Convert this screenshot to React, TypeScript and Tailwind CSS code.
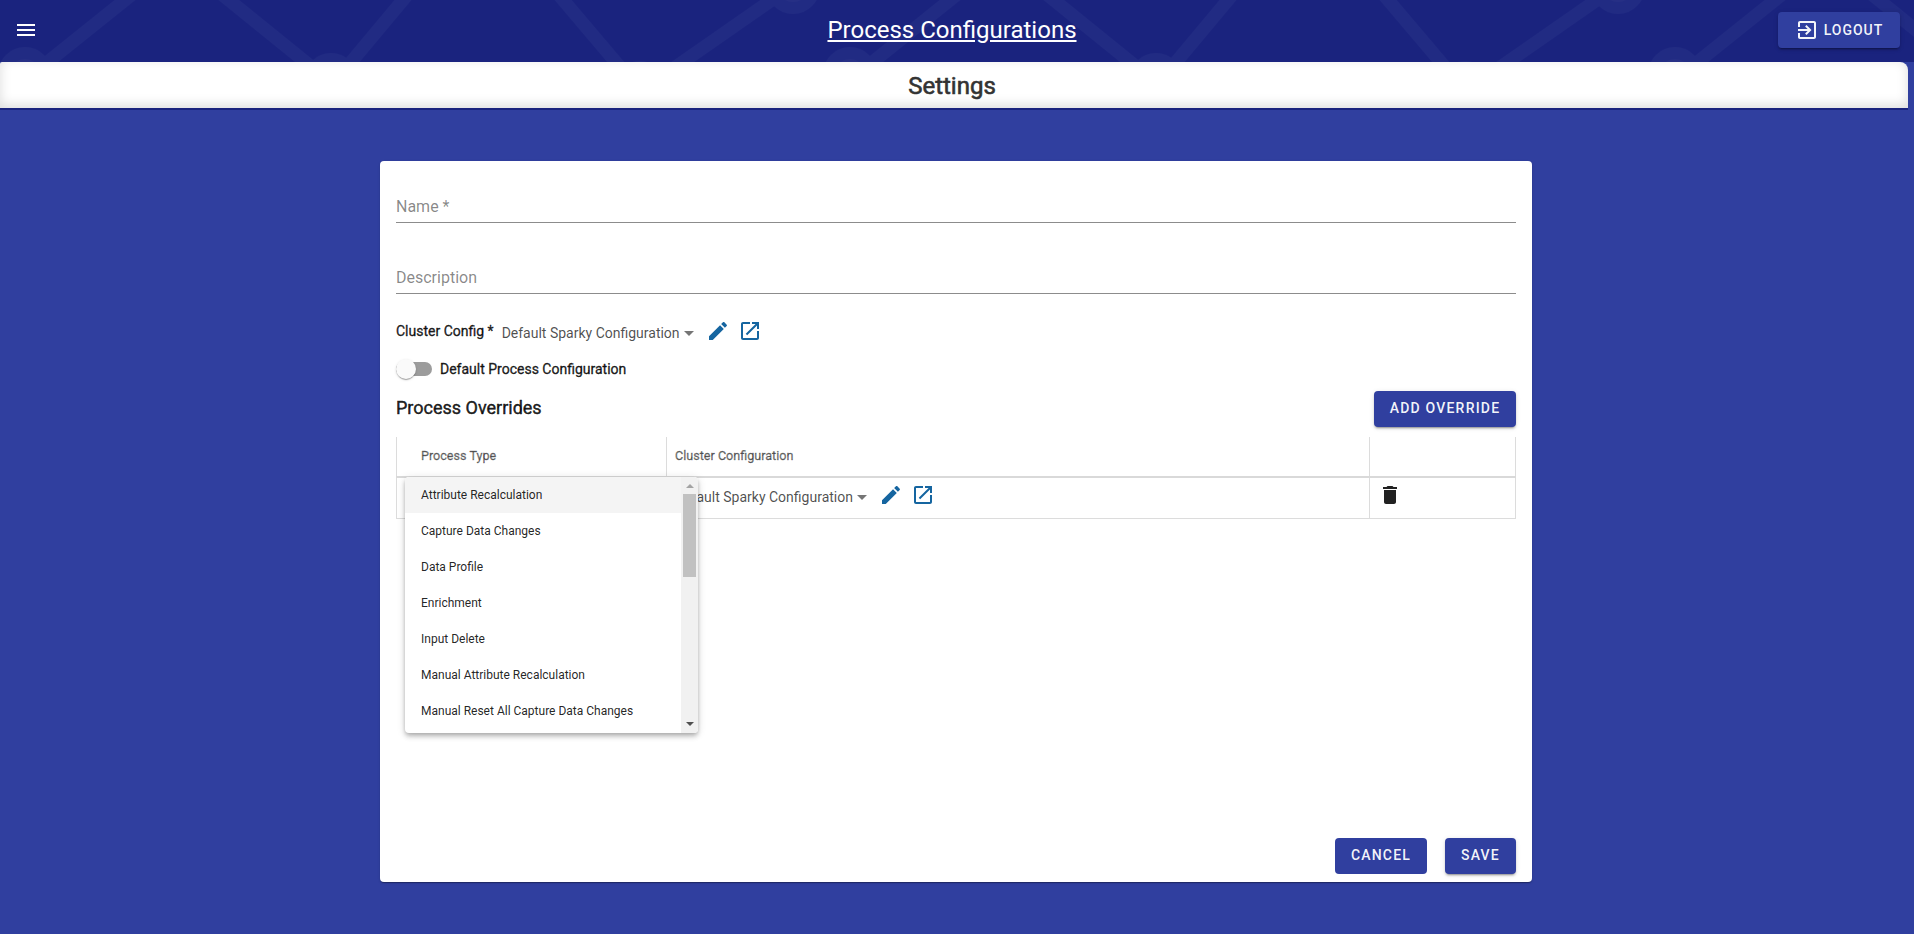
import React from "react";

const PROCESS_TYPES = [
  "Attribute Recalculation",
  "Capture Data Changes",
  "Data Profile",
  "Enrichment",
  "Input Delete",
  "Manual Attribute Recalculation",
  "Manual Reset All Capture Data Changes",
];

const ICONS = {
  menu: "M3 18h18v-2H3v2zm0-5h18v-2H3v2zm0-7v2h18V6H3z",
  edit: "M3 17.25V21h3.75L17.81 9.94l-3.75-3.75L3 17.25zM20.71 7.04c.39-.39.39-1.02 0-1.41l-2.34-2.34c-.39-.39-1.02-.39-1.41 0l-1.83 1.83 3.75 3.75 1.83-1.83z",
  open: "M19 19H5V5h7V3H5c-1.11 0-2 .9-2 2v14c0 1.1.89 2 2 2h14c1.1 0 2-.9 2-2v-7h-2v7zM14 3v2h3.59l-9.83 9.83 1.41 1.41L19 6.41V10h2V3h-7z",
  trash: "M6 19c0 1.1.9 2 2 2h8c1.1 0 2-.9 2-2V7H6v12zM19 4h-3.5l-1-1h-5l-1 1H5v2h14V4z",
  exit: "M10.09 15.59L11.5 17l5-5-5-5-1.41 1.41L12.67 11H3v2h9.67l-2.58 2.59zM19 3H5c-1.11 0-2 .9-2 2v4h2V5h14v14H5v-4H3v4c0 1.1.89 2 2 2h14c1.1 0 2-.9 2-2V5c0-1.1-.9-2-2-2z",
};

function Icon({ name, className = "" }: { name: keyof typeof ICONS; className?: string }) {
  return (
    <svg viewBox="0 0 24 24" fill="currentColor" className={`size-6 shrink-0 ${className}`}>
      <path d={ICONS[name]} />
    </svg>
  );
}

function HeaderPattern() {
  return (
    <svg className="absolute inset-0 h-full w-full" aria-hidden="true">
      <defs>
        <pattern id="network" width="825" height="62" patternUnits="userSpaceOnUse">
          <g stroke="#212b83" strokeWidth="13" fill="none">
            <path d="M140 -12L34 73M214 -12L319 73M413 -12L342 73M553 -12L625 73M789 -12L667 73" />
          </g>
          <g fill="#212b83">
            <circle cx="25" cy="74" r="27" />
            <circle cx="331" cy="80" r="27" />
            <circle cx="640" cy="88" r="27" />
            <circle cx="793" cy="-13" r="27" />
          </g>
          <g fill="#262f85">
            <circle cx="25" cy="74" r="15" />
            <circle cx="793" cy="-13" r="15" />
          </g>
        </pattern>
      </defs>
      <rect width="100%" height="100%" fill="url(#network)" />
    </svg>
  );
}

function Button({ children, className = "" }: { children: React.ReactNode; className?: string }) {
  return (
    <button
      className={`flex h-9 items-center justify-center rounded-[4px] bg-[#303f9f] text-sm font-medium text-white/95 uppercase ${className}`}
    >
      {children}
    </button>
  );
}

const RAISED = "shadow-[0_3px_1px_-2px_rgba(0,0,0,0.2),0_2px_2px_0_rgba(0,0,0,0.14),0_1px_5px_0_rgba(0,0,0,0.12)]";

function ClusterSelect() {
  return (
    <div className="flex items-center">
      <span className="mt-1 w-[178px] text-sm leading-5 whitespace-nowrap text-black/70">
        Default Sparky Configuration
      </span>
      <span className="mt-[5px] ml-1 border-x-5 border-t-5 border-x-transparent border-t-black/54" />
      <Icon name="edit" className="ml-3 text-[#1565a0]" />
      <Icon name="open" className="ml-2 text-[#1565a0]" />
    </div>
  );
}

function Field({ label }: { label: string }) {
  return (
    <div className="flex h-[71px] items-end border-b border-black/45 pb-[3px] text-base leading-6 text-black/48">
      {label}
    </div>
  );
}

function ProcessTypeMenu() {
  return (
    <div className="absolute top-[40px] left-[9px] z-10 flex h-64 w-[293px] overflow-hidden rounded-[4px] bg-white shadow-[0_2px_4px_-1px_rgba(0,0,0,0.2),0_4px_5px_0_rgba(0,0,0,0.14),0_1px_10px_0_rgba(0,0,0,0.12)]">
      <ul className="flex-1">
        {PROCESS_TYPES.map((type, i) => (
          <li
            key={type}
            className={`flex h-9 items-center px-4 text-xs whitespace-nowrap text-black/87 ${i === 0 ? "bg-[#f4f4f4]" : ""}`}
          >
            {type}
          </li>
        ))}
      </ul>
      <div className="flex w-[17px] flex-col items-center bg-[#f1f1f1]">
        <div className="flex h-[17px] items-center">
          <span className="border-x-4 border-b-4 border-x-transparent border-b-[#a3a3a3]" />
        </div>
        <div className="h-[83px] w-[13px] bg-[#c1c1c1]" />
        <div className="mt-auto flex h-[18px] items-center pb-px">
          <span className="border-x-4 border-t-4 border-x-transparent border-t-[#505050]" />
        </div>
      </div>
    </div>
  );
}

export default function App() {
  return (
    <div className="flex h-[934px] flex-col overflow-hidden bg-[#303f9f] font-[Roboto,sans-serif]">
      <header className="relative h-[62px] shrink-0 bg-[#1a237e]">
        <HeaderPattern />
        <div className="relative grid h-[60px] grid-cols-3 items-center pr-[14px] pl-[14px] text-white">
          <Icon name="menu" />
          <h1 className="mr-[10px] justify-self-center text-2xl leading-8 whitespace-nowrap underline">
            Process Configurations
          </h1>
          <Button className={`w-[122px] justify-self-end tracking-[1px] ${RAISED}`}>
            <Icon name="exit" className="mr-[5px]" />
            <span className="pb-px">Logout</span>
          </Button>
        </div>
      </header>

      <div className="mr-1.5 flex h-12 shrink-0 items-center justify-center rounded-tl-[2px] rounded-tr-[8px] border-b-2 border-[#1a237e] bg-white shadow-[inset_0_-3px_12px_rgba(0,0,0,0.14)]">
        <h2 className="mt-0.5 mr-1 text-2xl text-[#333] [-webkit-text-stroke:0.6px]">Settings</h2>
      </div>

      <main className="mt-[51px] ml-[380px] flex h-[721px] w-[1152px] flex-col rounded-[4px] bg-white px-4 pb-2 shadow-[0_2px_1px_-1px_rgba(0,0,0,0.2),0_1px_1px_0_rgba(0,0,0,0.14),0_1px_3px_0_rgba(0,0,0,0.12)]">
        <div className="-mt-[9px]">
          <Field label="Name *" />
          <Field label="Description" />
        </div>

        <div className="mt-[25px] flex h-6 items-center gap-2">
          <span className="text-sm text-black/87 [-webkit-text-stroke:0.35px]">Cluster Config *</span>
          <ClusterSelect />
        </div>

        <div className="mt-[16px] flex h-5 items-center gap-2">
          <span className="flex h-[14px] w-9 items-center rounded-full bg-[#9c9c9c]">
            <span className="size-5 rounded-full bg-[#fafafa] shadow-[0_2px_1px_-1px_rgba(0,0,0,0.2),0_1px_1px_0_rgba(0,0,0,0.14),0_1px_3px_0_rgba(0,0,0,0.12)]" />
          </span>
          <span className="pb-px text-sm text-black/87 [-webkit-text-stroke:0.35px]">Default Process Configuration</span>
        </div>

        <div className="mt-3 flex h-9 items-center justify-between">
          <h3 className="pb-0.5 text-lg text-black/87 [-webkit-text-stroke:0.45px]">Process Overrides</h3>
          <Button className={`w-[142px] pb-0.5 tracking-[1.2px] ${RAISED}`}>Add Override</Button>
        </div>

        <div className="relative mt-[10px]">
          <div className="grid h-[41px] grid-cols-[270px_703px_147px] border-b-2 border-[#d9d9d9] text-[12.6px] text-black/54 [-webkit-text-stroke:0.35px]">
            <div className="flex items-center border-l border-[#dcdcdc] pl-6">Process Type</div>
            <div className="flex items-center border-l border-[#dcdcdc] pl-2">Cluster Configuration</div>
            <div className="border-x border-[#dcdcdc]" />
          </div>
          <div className="grid h-[41px] grid-cols-[270px_703px_147px] border-b border-[#dcdcdc]">
            <div className="border-l border-[#dcdcdc]" />
            <div className="flex items-start border-l border-[#dcdcdc] pt-[5px] pl-2">
              <ClusterSelect />
            </div>
            <div className="flex items-start border-x border-[#dcdcdc] pt-[5px] pl-2 text-[#212121]">
              <Icon name="trash" />
            </div>
          </div>
          <ProcessTypeMenu />
        </div>

        <div className="mt-auto flex justify-end gap-[18px]">
          <Button className="w-[92px] pb-0.5 tracking-[1.2px]">Cancel</Button>
          <Button className={`w-[71px] pb-0.5 tracking-[1.2px] ${RAISED}`}>Save</Button>
        </div>
      </main>
    </div>
  );
}
